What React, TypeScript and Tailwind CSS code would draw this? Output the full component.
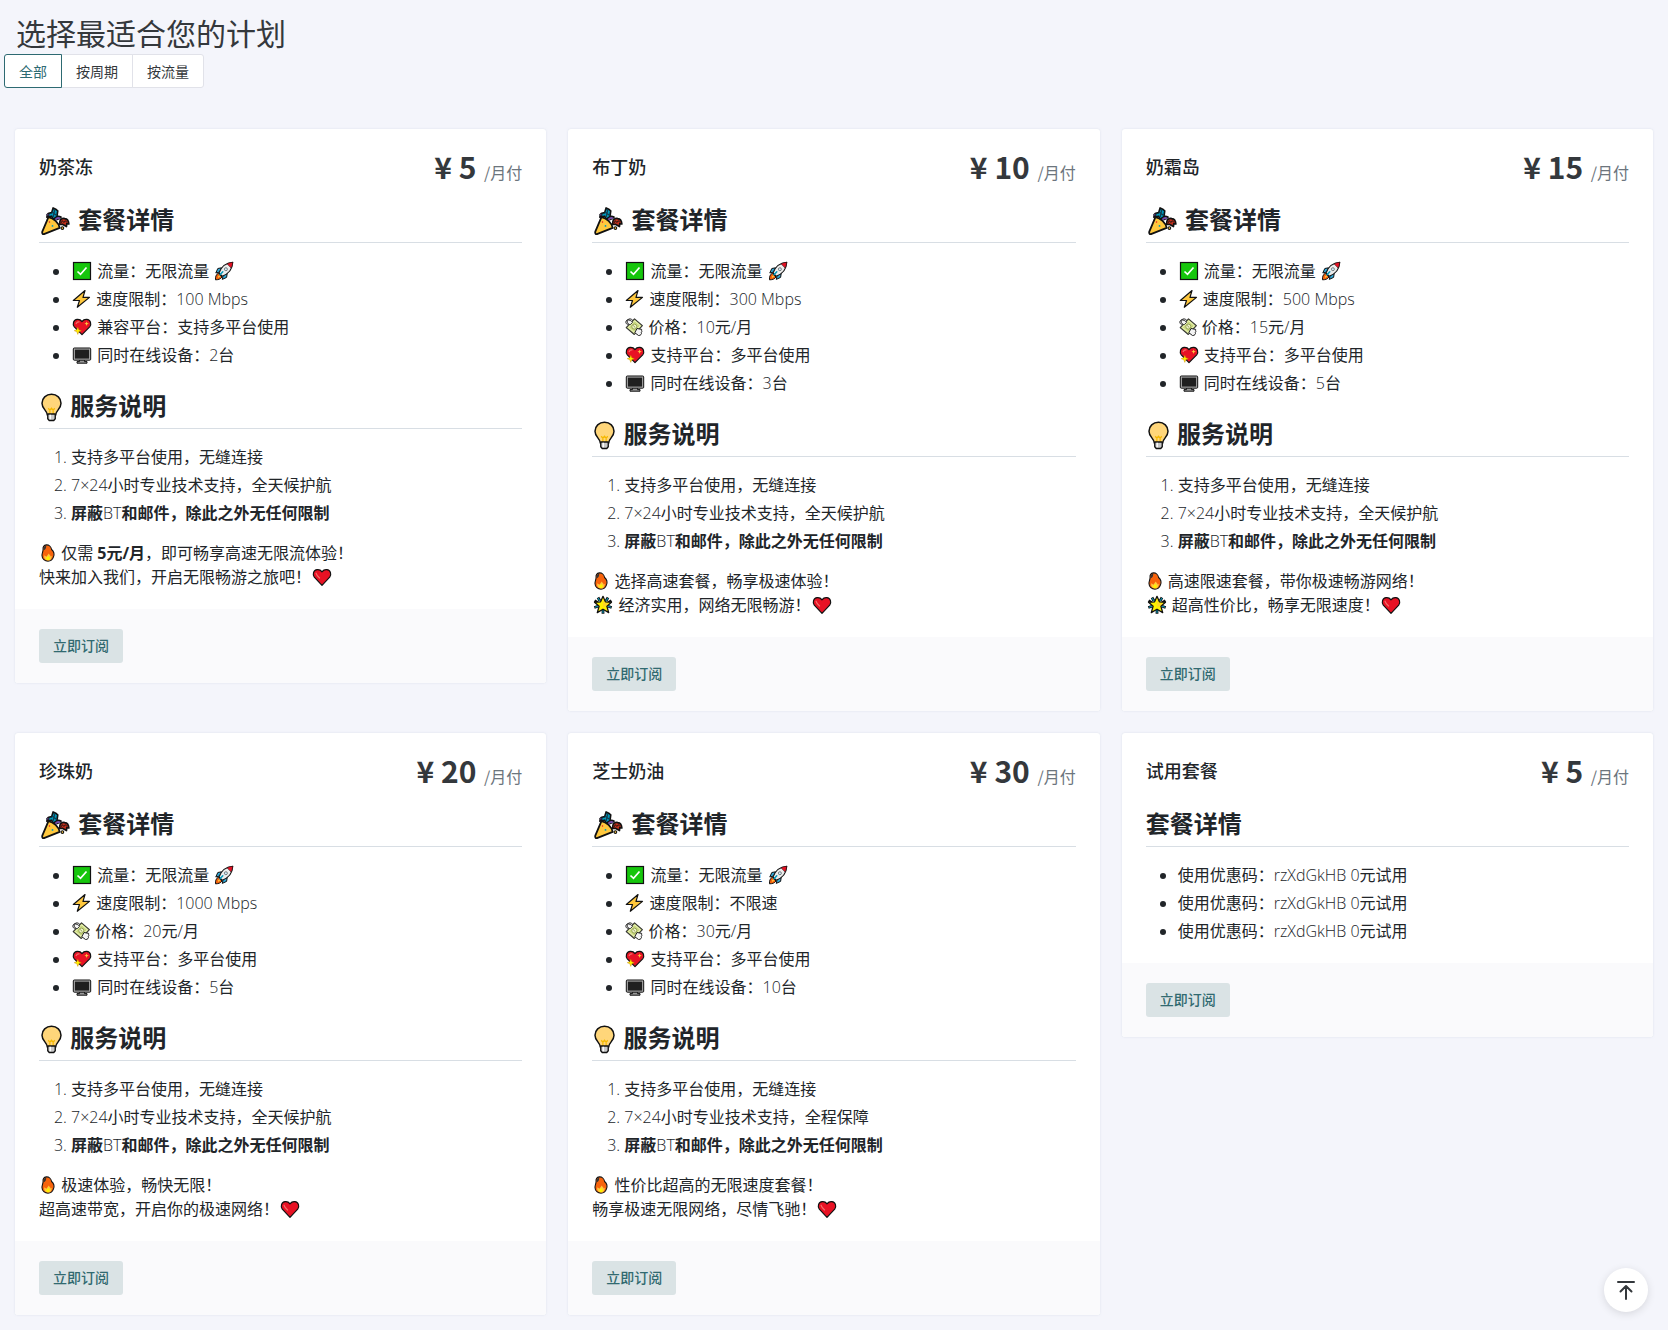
import React, { useState } from "react";

type IconProps = { name: string };

const iconSizes: Record<string, string> = {
  party: "w-[33px] h-[30px]",
  bulb: "w-[25px] h-[30px]",
  check: "w-[22px] h-5",
  rocket: "w-[22px] h-5",
  zap: "w-[21px] h-5",
  money: "w-5 h-5",
  love: "w-[22px] h-5",
  desktop: "w-[22px] h-5",
  fire: "w-[18px] h-5",
  star: "w-[22px] h-5",
  heart: "w-[22px] h-5",
};

const drawings: Record<string, React.ReactNode> = {
  check: (
    <>
      <rect x="1.5" y="1.5" width="17" height="17" fill="#16c60c" stroke="#111" strokeWidth="1.2" />
      <path d="M5.5 10.5 8.5 13.3 14.5 6.5" fill="none" stroke="#fff" strokeWidth="1.7" />
    </>
  ),
  zap: (
    <path d="M13.5 1.5 1.8 11.5H8L5.8 18.3 18 8.4H11.5Z" fill="#ffc83d" stroke="#111" strokeWidth="1.2" strokeLinejoin="round" />
  ),
  heart: (
    <>
      <path d="M10 18.3 2.3 10.2C.3 7.6 1.3 3 5.2 2.6 7.5 2.4 9 3.4 10 4.8 11 3.4 12.5 2.4 14.8 2.6 18.7 3 19.7 7.6 17.7 10.2Z" fill="#e81224" stroke="#111" strokeWidth="1.2" strokeLinejoin="round" />
      <path d="M4 6.2C4.6 8.2 6 9.8 7.6 11" fill="none" stroke="#f2706b" strokeWidth="1.2" strokeLinecap="round" />
    </>
  ),
  love: (
    <>
      <path d="M10 17.6 2.3 9.8C.3 7.2 1.3 2.8 5.2 2.4 7.5 2.2 9 3.2 10 4.6 11 3.2 12.5 2.2 14.8 2.4 18.7 2.8 19.7 7.2 17.7 9.8Z" fill="#e81224" stroke="#111" strokeWidth="1.2" strokeLinejoin="round" />
      <path d="M4.2 6.5C5 5 6 4.7 7 4.8" fill="none" stroke="#f2706b" strokeWidth="1.3" strokeLinecap="round" />
      <path d="M14.6 4.4 15.2 6.1 16.9 6.7 15.2 7.3 14.6 9 14 7.3 12.4 6.7 14 6.1Z" fill="#ffc83d" />
      <path d="M5.8 10.2 6.8 12.8 9.4 13.7 6.8 14.7 5.8 17.4 4.8 14.7 2.2 13.7 4.8 12.8Z" fill="#fff100" stroke="#c27a00" strokeWidth=".4" />
    </>
  ),
  desktop: (
    <>
      <path d="M7.5 14.5H12.5V16.6H15V18.2H5V16.6H7.5Z" fill="#999" stroke="#111" strokeWidth="1" />
      <rect x="1.3" y="3" width="17.4" height="12.2" rx="1" fill="#aaa" stroke="#111" strokeWidth="1" />
      <rect x="2.9" y="4.6" width="14.2" height="9" fill="#1f1f1f" />
    </>
  ),
  rocket: (
    <>
      <path d="M4.2 12.3C1.8 13.5 1.4 16.2 1.5 18.8 4 18.8 6.8 18.2 8 16Z" fill="#f7630c" stroke="#111" strokeWidth="1" strokeLinejoin="round" />
      <path d="M3.9 15.6 5.4 14.2 6.3 15.2 4 17Z" fill="#ffc83d" />
      <path d="M7.5 6.8 3.8 7.5 1.8 12 5.6 11ZM13.2 12.6 12.6 16.4 8.3 18.4 9 14.8Z" fill="#30a8d8" stroke="#111" strokeWidth="1" strokeLinejoin="round" />
      <path d="M5 12C7.2 5.8 11.5 1.7 18.8 1.2 18.4 8.5 14.4 12.9 8.2 15.2Z" fill="#ececec" stroke="#111" strokeWidth="1.1" strokeLinejoin="round" />
      <path d="M13 2.8C14.8 1.9 16.8 1.4 18.7 1.3 18.6 3.3 18 5.3 17.1 7.1Z" fill="#e81224" stroke="#111" strokeWidth=".5" />
      <circle cx="11.9" cy="8.2" r="1.5" fill="#cfeefb" stroke="#555" strokeWidth=".7" />
      <path d="M6 13.8 8.8 10.8" stroke="#0099bc" strokeWidth="1.5" strokeLinecap="round" />
    </>
  ),
  money: (
    <>
      <path d="M4.6 7.2C1.2 7.8.9 3.4 4 2.7 5 1.5 7.2 1.6 8.5 3.2L10.5 4Z" fill="#f4f4f4" stroke="#222" strokeWidth="1" strokeLinejoin="round" />
      <path d="M10.5 1.8 18.4 8.6 10.3 17.5 2.2 10.6Z" fill="#cbd980" stroke="#333" strokeWidth="1.1" strokeLinejoin="round" />
      <path d="M10.7 3.8 16.3 8.7 10.2 15.3 4.4 10.5Z" fill="none" stroke="#edf4bd" strokeWidth="1" />
      <circle cx="10.3" cy="9.6" r="2.5" fill="#eff3c9" stroke="#849343" strokeWidth=".8" />
      <path d="M9.2 8.5 11.4 10.7" stroke="#849343" strokeWidth=".9" />
      <path d="M3 3.2C5.2 2.6 7.4 3.6 8.6 5.3L6.4 7.6C4.8 7.8 3.2 6.6 3 3.2Z" fill="#f4f4f4" stroke="#222" strokeWidth=".9" strokeLinejoin="round" />
      <path d="M13 11.5 17.7 12.4C16.8 13.3 18.8 14.3 17.3 15.3 18.2 16.8 16.5 18.8 14.5 18.5L10.8 15.7Z" fill="#f4f4f4" stroke="#222" strokeWidth="1" strokeLinejoin="round" />
    </>
  ),
  fire: (
    <>
      <path d="M8.2 1C11 .8 13.5 3 14 6.1 16.5 8.4 17.2 11.7 16.1 14.3 15 17.5 12.8 19 10 19 6.5 19 3.4 16.6 3.3 12.8 3.2 10.4 4.5 8.5 4.5 6.3 4.2 3.6 5.8 1.4 8.2 1Z" fill="#f7630c" stroke="#111" strokeWidth="1.2" strokeLinejoin="round" />
      <path d="M5 6.4C5 4 6.2 2.4 8 1.6 8.2 3.6 7.6 5 6.2 6.8Z" fill="#333" />
      <path d="M6 12.6 8.2 14.2 10.8 10.6C11.4 12 12.7 12.4 12.8 13.8L14.2 13C14.2 16.4 12.7 18.2 10 18.2 7 18.2 5 16 6 12.6Z" fill="#ffc83d" />
      <path d="M10.2 13.2 12 15.4C12.1 17 11.2 18 10 18 8.6 18 7.6 16.9 8.2 15.4Z" fill="#fff100" />
    </>
  ),
  star: (
    <>
      <path d="M5 2.5 7 6M15 2.5 13 6M1.3 12.5 5 11.2M18.7 12.5 15 11.2M10 15V18.8M1.5 5.7 4.5 7.5M18.5 5.7 15.5 7.5" stroke="#111" strokeWidth="2.8" />
      <path d="M5 3 7 6M15 3 13 6M2 12.3 5 11.2M18 12.3 15 11.2M10 15V18" stroke="#0099bc" strokeWidth="1.1" />
      <path d="M10 1.3 12.4 6.8 18.5 7.3 13.9 11.2 15.7 17.6 10 14.2 4.3 17.6 6.1 11.2 1.5 7.3 7.6 6.8Z" fill="#fff100" stroke="#111" strokeWidth="1.3" strokeLinejoin="round" />
      <path d="M10 3.5 11.4 7.8 16 8.3 12.5 11.2 10 12Z" fill="#ffc83d" opacity=".6" />
    </>
  ),
  bulb: (
    <>
      <path d="M10 1.8C5.6 1.8 2.4 5 2.4 9 2.4 13.4 6.2 14.4 6.6 18.2H13.4C13.8 14.4 17.6 13.4 17.6 9 17.6 5 14.4 1.8 10 1.8Z" fill="#ffd67a" stroke="#111" strokeWidth="1.2" />
      <path d="M7.4 13 8.7 14.6 10 13 11.3 14.6 12.6 13M8.7 14.6V18M11.3 14.6V18" fill="none" stroke="#f5b800" strokeWidth="1" />
      <path d="M7 17.6H13V21.4L11.8 22.8H8.2L7 21.4Z" fill="#c9c9c9" stroke="#111" strokeWidth="1.1" strokeLinejoin="round" />
      <path d="M9 18.2V21.8" stroke="#fff" strokeWidth="1.1" />
    </>
  ),
  party: (
    <>
      <path d="M12.8 12.3C12.3 9.7 14 7.6 16.2 8.4 18 8.6 18.8 10.3 18.9 12L17.5 11.8 17.3 13.7 14.6 12.2Z" fill="#c5301b" stroke="#111" strokeWidth="1.1" strokeLinejoin="round" />
      <path d="M13.6 11.4 14.6 9.8 15.6 11 16.6 9.8 17.6 11" fill="none" stroke="#111" strokeWidth=".6" />
      <path d="M5.4 4.8 7.5 4.4 8.4 1.3 10.5 2.4 11.5 3.2 10.9 7.6 8.5 9 7.4 6.8 4.2 7.4Z" fill="#0099bc" stroke="#111" strokeWidth="1.1" strokeLinejoin="round" />
      <path d="M7.5 3.8 11 6.5M9.5 2.5 8.4 7.5" stroke="#123e50" strokeWidth=".8" />
      <path d="M9.8 9.4C10.2 7.7 12.5 7.2 13.5 8.3" fill="none" stroke="#111" strokeWidth="2.8" />
      <path d="M10 9.3C10.5 8 12 7.7 13 8.3" fill="none" stroke="#744da9" strokeWidth="1.2" />
      <path d="M5.3 7.4C8.6 8 12.2 11.2 12.8 14.6L2.3 18.8C1.3 18.9.9 18 1.2 17.1Z" fill="#ffc83d" stroke="#111" strokeWidth="1.2" strokeLinejoin="round" />
      <circle cx="6" cy="10.7" r=".5" fill="#e81224" />
      <circle cx="8" cy="13.3" r=".6" fill="#0099bc" />
      <circle cx="14.6" cy="14.7" r=".9" fill="#ffc83d" stroke="#111" strokeWidth=".7" />
      <circle cx="4.9" cy="5.9" r=".8" fill="#744da9" stroke="#111" strokeWidth=".6" />
    </>
  ),
};

const Icon = ({ name }: IconProps) => (
  <svg
    viewBox={name === "bulb" ? "0 0 20 24" : "0 0 20 20"}
    aria-hidden="true"
    className={`inline-block align-middle -mt-3 -mb-2 ${iconSizes[name]}`}
  >
    {drawings[name]}
  </svg>
);

// latin letters and digits are set lighter than the chinese around them
const Mixed = ({ text }: { text: string }) => (
  <>
    {text.split(/([A-Za-z0-9×/ ]+)/).map((part, index) =>
      index % 2 === 1 ? (
        <span className="font-[350]" key={index}>
          {part}
        </span>
      ) : (
        part
      )
    )}
  </>
);

type Plan = {
  name: string;
  price: number;
  features: { icon?: string; text: string; after?: string }[];
  support?: string;
  notes?: React.ReactNode[];
};

const traffic = { icon: "check", text: "流量：无限流量", after: "rocket" };
const coupon = { text: "使用优惠码：rzXdGkHB 0元试用" };

const plans: Plan[] = [
  {
    name: "奶茶冻",
    price: 5,
    features: [
      traffic,
      { icon: "zap", text: "速度限制：100 Mbps" },
      { icon: "love", text: "兼容平台：支持多平台使用" },
      { icon: "desktop", text: "同时在线设备：2台" },
    ],
    support: "全天候护航",
    notes: [
      <>
        <Icon name="fire" /> 仅需 <strong>5元/月</strong>，即可畅享高速无限流体验！
      </>,
      <>
        快来加入我们，开启无限畅游之旅吧！<Icon name="heart" />
      </>,
    ],
  },
  {
    name: "布丁奶",
    price: 10,
    features: [
      traffic,
      { icon: "zap", text: "速度限制：300 Mbps" },
      { icon: "money", text: "价格：10元/月" },
      { icon: "love", text: "支持平台：多平台使用" },
      { icon: "desktop", text: "同时在线设备：3台" },
    ],
    support: "全天候护航",
    notes: [
      <>
        <Icon name="fire" /> 选择高速套餐，畅享极速体验！
      </>,
      <>
        <Icon name="star" /> 经济实用，网络无限畅游！<Icon name="heart" />
      </>,
    ],
  },
  {
    name: "奶霜岛",
    price: 15,
    features: [
      traffic,
      { icon: "zap", text: "速度限制：500 Mbps" },
      { icon: "money", text: "价格：15元/月" },
      { icon: "love", text: "支持平台：多平台使用" },
      { icon: "desktop", text: "同时在线设备：5台" },
    ],
    support: "全天候护航",
    notes: [
      <>
        <Icon name="fire" /> 高速限速套餐，带你极速畅游网络！
      </>,
      <>
        <Icon name="star" /> 超高性价比，畅享无限速度！<Icon name="heart" />
      </>,
    ],
  },
  {
    name: "珍珠奶",
    price: 20,
    features: [
      traffic,
      { icon: "zap", text: "速度限制：1000 Mbps" },
      { icon: "money", text: "价格：20元/月" },
      { icon: "love", text: "支持平台：多平台使用" },
      { icon: "desktop", text: "同时在线设备：5台" },
    ],
    support: "全天候护航",
    notes: [
      <>
        <Icon name="fire" /> 极速体验，畅快无限！
      </>,
      <>
        超高速带宽，开启你的极速网络！<Icon name="heart" />
      </>,
    ],
  },
  {
    name: "芝士奶油",
    price: 30,
    features: [
      traffic,
      { icon: "zap", text: "速度限制：不限速" },
      { icon: "money", text: "价格：30元/月" },
      { icon: "love", text: "支持平台：多平台使用" },
      { icon: "desktop", text: "同时在线设备：10台" },
    ],
    support: "全程保障",
    notes: [
      <>
        <Icon name="fire" /> 性价比超高的无限速度套餐！
      </>,
      <>
        畅享极速无限网络，尽情飞驰！<Icon name="heart" />
      </>,
    ],
  },
  { name: "试用套餐", price: 5, features: [coupon, coupon, coupon] },
];

const SectionTitle = ({ icon, text }: { icon?: string; text: string }) => (
  <h2 className="border-b border-[#d8dee4] pb-[7px] text-2xl leading-[30px] font-semibold">
    {icon && (
      <>
        <Icon name={icon} />{" "}
      </>
    )}
    {text}
  </h2>
);

const PlanCard = ({ plan }: { plan: Plan }) => (
  <div className="overflow-hidden rounded-[3px] bg-white shadow-[0_0_2px_rgba(200,206,222,0.6)]">
    <div className="px-6 py-5">
      <div className="mb-5 flex h-9 items-center justify-between">
        <h3 className="text-lg font-medium">{plan.name}</h3>
        <div className="pb-0.5 text-base text-[#6c757d] font-['Noto_Sans_CJK_SC',sans-serif]">
          <span className="text-[30px] leading-9 font-semibold text-[#34383c]">¥ {plan.price}</span>{" "}
          <span className="ml-1">/月付</span>
        </div>
      </div>

      <SectionTitle icon={plan.support && "party"} text="套餐详情" />
      <ul className="mt-4 list-disc space-y-1 pl-8">
        {plan.features.map((item, index) => (
          <li key={index}>
            {item.icon && (
              <>
                <Icon name={item.icon} />{" "}
              </>
            )}
            <Mixed text={item.text} />
            {item.after && (
              <>
                {" "}
                <Icon name={item.after} />
              </>
            )}
          </li>
        ))}
      </ul>

      {plan.support && (
        <div className="mt-6">
          <SectionTitle icon="bulb" text="服务说明" />
          <ol className="mt-4 list-decimal space-y-1 pl-8 marker:font-[350]">
            <li>支持多平台使用，无缝连接</li>
            <li>
              <Mixed text={`7×24小时专业技术支持，${plan.support}`} />
            </li>
            <li>
              <strong>屏蔽</strong>
              <Mixed text="BT" />
              <strong>和邮件，除此之外无任何限制</strong>
            </li>
          </ol>
          <div className="mt-4">
            {plan.notes?.map((note, index) => (
              <p className="h-6" key={index}>
                {note}
              </p>
            ))}
          </div>
        </div>
      )}
    </div>
    <div className="bg-[#fafafc] px-6 py-5">
      <button className="block rounded-[3px] bg-[#dae3e5] px-3.5 py-[7px] text-sm font-medium text-[#316a70]">
        立即订阅
      </button>
    </div>
  </div>
);

const tabs = ["全部", "按周期", "按流量"];

const App = () => {
  const [active, setActive] = useState(0);

  return (
    <div className="min-h-screen bg-[#f4f5fb] pb-[15px] text-base text-[#212529] font-['Open_Sans','Noto_Sans_CJK_SC',sans-serif]">
      <h1 className="px-4 pt-3.5 text-[30px] leading-10 text-[#34383c]">选择最适合您的计划</h1>
      <div className="ml-1 flex text-sm">
        {tabs.map((tab, index) => (
          <button
            key={tab}
            onClick={() => setActive(index)}
            className={`-mr-px border bg-white px-3.5 pt-[7px] pb-[5px] first:rounded-l-[3px] last:rounded-r-[3px] ${
              active === index ? "relative border-[#2d6a72] text-[#2d6a72]" : "border-[#e1e2e9] text-[#34383c]"
            }`}
          >
            {tab}
          </button>
        ))}
      </div>

      <div className="mt-[41px] grid grid-cols-1 items-start gap-[22px] px-[15px] md:grid-cols-2 lg:grid-cols-3">
        {plans.map((plan) => (
          <PlanCard plan={plan} key={plan.name} />
        ))}
      </div>

      <button
        aria-label="返回顶部"
        onClick={() => window.scrollTo({ top: 0, behavior: "smooth" })}
        className="fixed right-5 bottom-[18px] flex size-11 items-center justify-center rounded-full bg-white text-[#34383c] shadow-[0_2px_8px_rgba(0,0,0,0.12)]"
      >
        <svg viewBox="0 0 24 24" className="size-6" fill="none" stroke="currentColor" strokeWidth="2" strokeLinecap="round" strokeLinejoin="round">
          <path d="M4 4H20M12 21V8M6.5 13.5 12 8 17.5 13.5" />
        </svg>
      </button>
    </div>
  );
};

export default App;
